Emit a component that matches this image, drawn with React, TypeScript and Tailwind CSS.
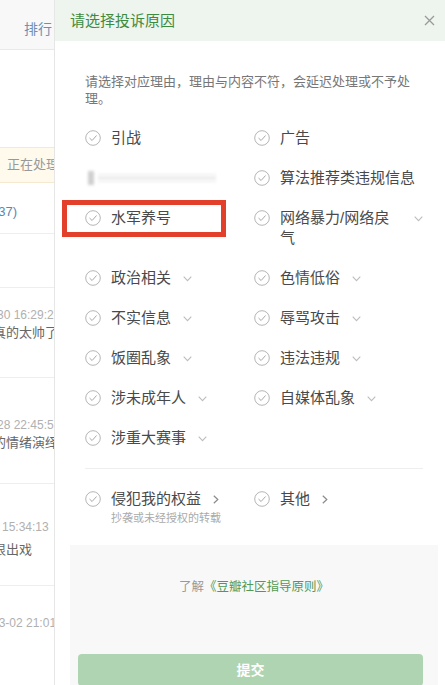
import React from "react";

const CheckCircle = () => (
  <svg width="16" height="16" viewBox="0 0 16 16" className="shrink-0 mt-[2px]">
    <circle cx="8" cy="8" r="7.3" fill="none" stroke="#b5b5b5" strokeWidth="1" />
    <path d="M4.8 8.3 L7.1 10.5 L11.3 5.8" fill="none" stroke="#a8a8a8" strokeWidth="1" strokeLinecap="round" strokeLinejoin="round" />
  </svg>
);

const ChevronDown = () => (
  <svg width="9" height="6" viewBox="0 0 9 6" className="shrink-0 ml-[12px] mt-[8px]">
    <path d="M0.7 0.7 L4.5 4.6 L8.3 0.7" fill="none" stroke="#bdbdbd" strokeWidth="1.1" />
  </svg>
);

const ChevronRight = () => (
  <svg width="6" height="9" viewBox="0 0 6 9" className="shrink-0 ml-[12px] mt-[6px]">
    <path d="M0.8 0.8 L4.8 4.5 L0.8 8.2" fill="none" stroke="#8a8a8a" strokeWidth="1.2" />
  </svg>
);

type Item = { label: string; more?: boolean; blurred?: boolean; boxed?: boolean } | null;

const items: Item[] = [
  { label: "引战" },
  { label: "广告" },
  { label: "", blurred: true },
  { label: "算法推荐类违规信息" },
  { label: "水军养号", boxed: true },
  { label: "网络暴力/网络戾气", more: true },
  { label: "政治相关", more: true },
  { label: "色情低俗", more: true },
  { label: "不实信息", more: true },
  { label: "辱骂攻击", more: true },
  { label: "饭圈乱象", more: true },
  { label: "违法违规", more: true },
  { label: "涉未成年人", more: true },
  { label: "自媒体乱象", more: true },
  { label: "涉重大赛事", more: true },
  null,
];

function Option({ item }: { item: Item }) {
  if (!item) return <div />;
  if (item.blurred) {
    return (
      <div className="flex items-center h-[20px] pl-[3px] blur-[1.5px]">
        <div className="w-[6px] h-[14px] bg-[#cfcfcf]" />
        <div className="ml-[4px] w-[118px] flex flex-col gap-[2px]">
          <div className="h-[1px] bg-[#e6e6e6]" />
          <div className="h-[2px] bg-[#e2e2e2]" />
          <div className="h-[1px] bg-[#e6e6e6]" />
        </div>
      </div>
    );
  }
  return (
    <div className="relative flex items-start">
      {item.boxed && (
        <div className="absolute left-[-23px] top-[-8px] w-[164px] h-[37px] border-[5px] border-[#e3402b]" />
      )}
      <CheckCircle />
      <span className="ml-[10px] min-w-0 text-[15px] leading-[20px] text-[#494949]">{item.label}</span>
      {item.more && <ChevronDown />}
    </div>
  );
}

function LeftStrip() {
  return (
    <div className="w-[55px] shrink-0 border-r border-[#e6e6e6] overflow-hidden bg-white">
      <div className="h-[50px] bg-[#f8f8f8] border-b border-[#e9e9e9] flex justify-end items-start pt-[20px] pr-[2px]">
        <span className="text-[14px] leading-[18px] text-[#6e8fb3] whitespace-nowrap">排行</span>
      </div>
      <div className="h-[97px]" />
      <div className="h-[36px] bg-[#fffaec] border-y border-[#f3ead0] flex items-center pl-[7px] whitespace-nowrap">
        <span className="text-[13px] text-[#999]">正在处理中</span>
      </div>
      <div className="h-[51px] border-b border-[#eeeeee] pt-[20px] whitespace-nowrap">
        <div className="ml-[-6px] text-[13px] leading-[18px] text-[#5d86b3]">(37)</div>
      </div>
      <div className="h-[54px] border-b border-[#eeeeee]" />
      <div className="h-[90px] border-b border-[#eeeeee] pt-[18px] whitespace-nowrap">
        <div className="ml-[-3px] text-[12px] leading-[18px] text-[#b0b0b0]">30 16:29:21</div>
        <div className="ml-[-7px] text-[13px] leading-[18px] text-[#666]">真的太帅了啊</div>
      </div>
      <div className="h-[106px] border-b border-[#eeeeee] pt-[38px] whitespace-nowrap">
        <div className="ml-[-3px] text-[12px] leading-[18px] text-[#b0b0b0]">28 22:45:51</div>
        <div className="ml-[-7px] text-[13px] leading-[18px] text-[#666]">的情绪演绎</div>
      </div>
      <div className="h-[102px] border-b border-[#eeeeee] pt-[34px] whitespace-nowrap">
        <div className="ml-[2px] text-[12px] leading-[18px] text-[#b0b0b0]">15:34:13</div>
        <div className="ml-[-7px] mt-[5px] text-[13px] leading-[18px] text-[#666]">很出戏</div>
      </div>
      <div className="pt-[28px] whitespace-nowrap">
        <div className="ml-[-8px] text-[12px] leading-[18px] text-[#b0b0b0]">03-02 21:01</div>
      </div>
    </div>
  );
}

export default function App() {
  return (
    <div className="w-[445px] h-[685px] overflow-hidden flex bg-white font-['Liberation_Sans','Noto_Sans_CJK_SC',sans-serif]">
      <LeftStrip />
      <div className="w-[398px] shrink-0 flex flex-col bg-white">
        <div className="h-[41px] shrink-0 bg-[#eef4ee] flex items-center justify-between pl-[15px] pr-[18px]">
          <span className="text-[15px] leading-[20px] text-[#3d8b41]">请选择投诉原因</span>
          <svg width="11" height="11" viewBox="0 0 11 11">
            <path d="M1 1 L10 10 M10 1 L1 10" stroke="#9a9a9a" strokeWidth="1.3" />
          </svg>
        </div>
        <div className="px-[30px] pt-[32px]">
          <p className="text-[13px] leading-[17px] text-[#777]">
            请选择对应理由，理由与内容不符，会延迟处理或不予处理。
          </p>
          <div className="mt-[21px] grid grid-cols-2 gap-y-5">
            {items.map((it, i) => (
              <Option key={i} item={it} />
            ))}
          </div>
          <div className="mt-5 border-t border-[#eeeeee]" />
          <div className="mt-[20px] grid grid-cols-2">
            <div className="flex items-start">
              <CheckCircle />
              <div className="ml-[10px] flex flex-col">
                <div className="flex items-start">
                  <span className="text-[15px] leading-[20px] text-[#494949]">侵犯我的权益</span>
                  <ChevronRight />
                </div>
                <span className="mt-[2px] text-[11px] leading-[14px] text-[#aaaaaa]">抄袭或未经授权的转载</span>
              </div>
            </div>
            <div className="flex items-start">
              <CheckCircle />
              <span className="ml-[10px] text-[15px] leading-[20px] text-[#494949]">其他</span>
              <ChevronRight />
            </div>
          </div>
        </div>
        <div className="mx-[15px] mt-[20px] flex-1 bg-[#f8f8f8] flex flex-col pt-[33px]">
          <div className="text-center text-[12.5px] leading-[18px]">
            <span className="text-[#999]">了解</span>
            <span className="text-[#4f9a55]">《豆瓣社区指导原则》</span>
          </div>
          <button className="mt-[58px] ml-[8px] mr-[15px] h-[32px] rounded-[4px] bg-[#afd4b1] text-white text-[14px] font-bold flex items-center justify-center">
            提交
          </button>
        </div>
      </div>
    </div>
  );
}
